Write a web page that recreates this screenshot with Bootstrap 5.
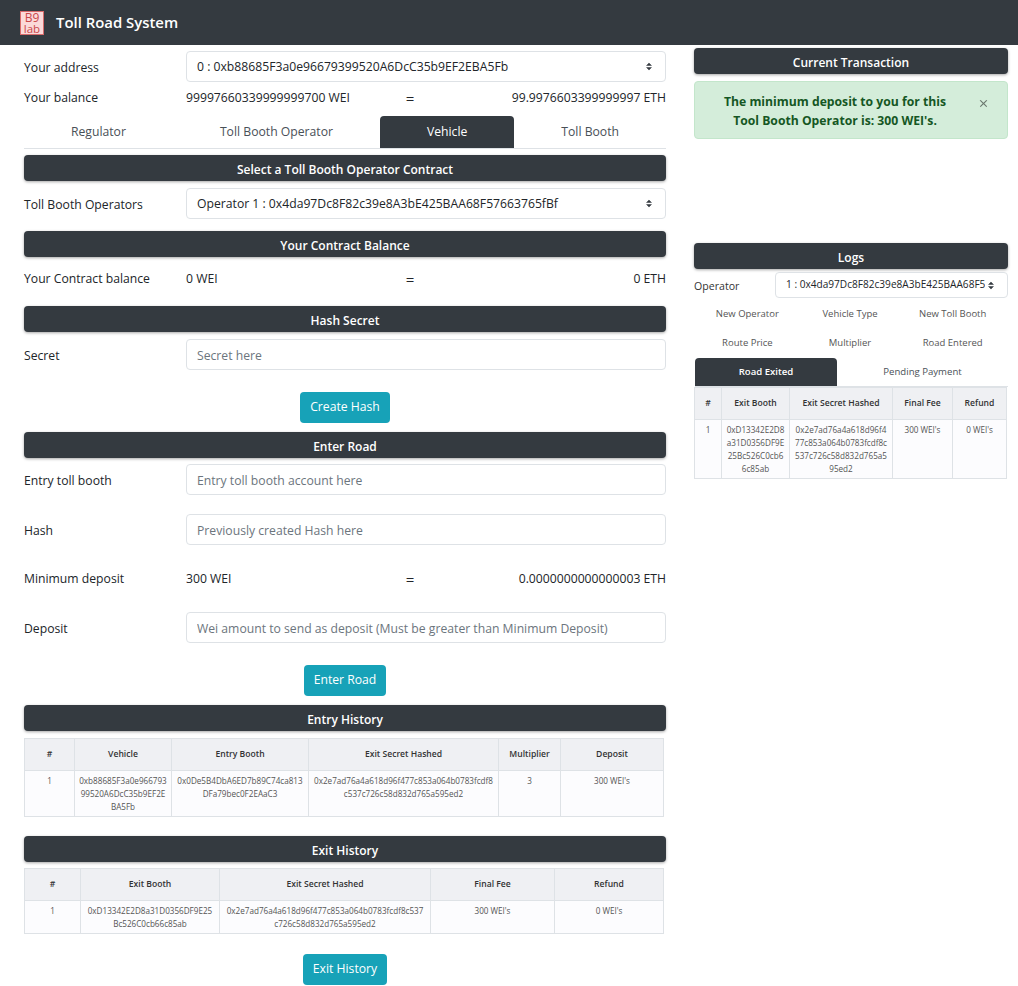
<!DOCTYPE html>
<html lang="en">
<head>
  <meta charset="UTF-8" />
  <title>Toll Road System</title>
  <link href="https://cdn.jsdelivr.net/npm/bootstrap@5.3.3/dist/css/bootstrap.min.css" rel="stylesheet" />
  <style>
    body { font-family: "Open Sans", "Noto Sans", sans-serif; font-size: 12.2px; line-height: 20px; color: #212529; overflow-x: hidden; }
    .top-bar { height: 45px; background: #343a40; padding: 0 20px; }
    .top-bar svg { overflow: visible; }
    .top-bar .brand { font-size: 14.9px; font-weight: 600; color: #fff; margin-left: 12px; margin-top: -2px; }
    .left-col { width: 642px; margin-left: 24px; padding-top: 6px; }
    .right-col { width: 314px; margin-left: 28px; padding-top: 3px; }
    .sec-bar { height: 26px; line-height: 26px; padding-top: 2px; background: #343a40; color: #fff; font-weight: 600; font-size: 12px; text-align: center; border-radius: 4px; box-shadow: 0 1px 3px rgba(0,0,0,.35); }
    .fld-row { display: flex; align-items: center; }
    .fld-label { width: 162px; flex: none; padding-top: 2px; }
    .txt-row { height: 20px; }
    .txt-row .fld-label { padding-top: 0; }
    .fld-row .form-control, .fld-row .form-select { height: 31px; font-size: 12.2px; padding: 2px 10px 0; border-radius: 4px; }
    .form-control::placeholder { color: #6c757d; }
    .fld-row .form-select, .fld-row .mini-select {
      background-image: url("data:image/svg+xml,%3csvg xmlns='http://www.w3.org/2000/svg' viewBox='0 0 4 5'%3e%3cpath fill='%23343a40' d='M2 0L0 2h4zm0 5L0 3h4z'/%3e%3c/svg%3e");
      background-size: 6px 9px; background-position: right 13px center;
    }
    .val-grid { display: grid; grid-template-columns: 192px 64px 1fr; flex: 1; }
    .val-grid > :nth-child(2) { text-align: center; font-size: 15px; }
    .val-grid > :nth-child(3) { text-align: right; }
    .tabs-main { height: 33px; }
    .tabs-main .nav-link, .tabs-log .nav-link { color: #495057; border: 0; border-radius: 4px 4px 0 0; padding: 0 4px; height: 32px; line-height: 32px; font-size: 12.2px; }
    .tabs-main .nav-link.active, .tabs-log .nav-link.active { background: #343a40; color: #fff; }
    .btn-teal { background: #17a2b8; border: 0; color: #fff; font-size: 12.2px; height: 31px; padding: 0 10px; border-radius: 4px; }
    .t-small { table-layout: fixed; width: 100%; font-size: 8.15px; line-height: 13px; color: #555; margin: 0; text-align: center; border-color: #dee2e6; }
    .t-small th { background: #eff0f3; height: 32px; vertical-align: middle; padding: 0 2px; font-weight: 600; color: #333; font-size: 8.6px; }
    .t-small td { background: #fcfcfe; padding: 3px 4px; vertical-align: top; word-break: break-all; }
    #entryTbl td:nth-child(2) { padding: 3px 3.4px; }
    #entryTbl td:nth-child(3) { padding: 3px; }
    #exitTbl td:nth-child(2) { padding: 3px 5px; }
    #exitTbl td:nth-child(3) { padding: 3px 5.5px; }
    .tbl-wrap { width: 640px; }
    #entryTbl th:nth-child(1) { width: 50px; } #entryTbl th:nth-child(2) { width: 97px; } #entryTbl th:nth-child(3) { width: 137px; } #entryTbl th:nth-child(4) { width: 190px; } #entryTbl th:nth-child(5) { width: 62px; }
    #exitTbl th:nth-child(1) { width: 56px; } #exitTbl th:nth-child(2) { width: 139px; } #exitTbl th:nth-child(3) { width: 211px; } #exitTbl th:nth-child(4) { width: 124px; }
    #logTbl th:nth-child(1) { width: 27px; } #logTbl th:nth-child(2) { width: 68px; } #logTbl th:nth-child(3) { width: 103px; } #logTbl th:nth-child(4) { width: 60px; }
    .m-6px { margin-top: 6px; } .m-7px { margin-top: 7px; } .m-8px { margin-top: 8px; } .m-9px { margin-top: 9px; }
    .m-12px { margin-top: 12px; } .m-17px { margin-top: 17px; } .m-19px { margin-top: 19px; } .m-20px { margin-top: 20px; } .m-22px { margin-top: 22px; } .m-23px { margin-top: 23px; } .m-24px { margin-top: 24px; }
    .alert-box { margin-top: 7px; height: 58px; margin-bottom: 0; padding: 10px 48px 0 16px; font-size: 12.2px; font-weight: 700; text-align: center; line-height: 19px; border-radius: 4px; background: #d4edda; border-color: #c3e6cb; color: #155724; }
    .alert-box .btn-close { padding: 0; width: 9px; height: 9px; top: 17px; right: 19px; background-size: 9px; }
    .logs-gap { margin-top: 104px; }
    .op-row { height: 26px; margin-top: 3px; font-size: 10.6px; }
    .op-label { width: 81px; flex: none; color: #333; padding-top: 1px; }
    .mini-select { height: 26px !important; font-size: 10.1px !important; padding: 0 22px 0 10px !important; }
    .pill-row { height: 29px; width: 308px; margin-left: 2px; font-size: 9.5px; color: #555; text-align: center; }
    .pill-row > div { flex: 1; line-height: 29px; padding-top: 1px; }
    .tabs-log { height: 29px; margin-left: 1px; margin-top: 2px; }
    .tabs-log .nav-link { height: 28px; line-height: 28px; font-size: 9.6px; }
    .tabs-log .nav-link.active { font-weight: 600; }
    .tabs-log .nav-item:first-child { flex: 0 0 142px; }
    .log-tbl-wrap { width: 313px; }
  </style>
</head>
<body>
  <div class="top-bar d-flex align-items-center">
    <svg width="24" height="24" viewBox="0 0 24 24">
      <rect x="0.5" y="0.5" width="23" height="23" fill="#fbd9d9" stroke="#d96b6b" />
      <text x="12" y="11" text-anchor="middle" font-family="Open Sans" font-size="12" fill="#c9474a">B9</text>
      <text x="12" y="21.5" text-anchor="middle" font-family="Open Sans" font-size="11.5" fill="#c9474a">lab</text>
    </svg>
    <span class="brand">Toll Road System</span>
  </div>

  <div class="d-flex">
    <div class="left-col">
      <div class="fld-row">
        <div class="fld-label">Your address</div>
        <select class="form-select"><option>0 : 0xb88685F3a0e96679399520A6DcC35b9EF2EBA5Fb</option></select>
      </div>
      <div class="fld-row txt-row m-6px">
        <div class="fld-label">Your balance</div>
        <div class="val-grid"><span>99997660339999999700 WEI</span><span>=</span><span>99.9976603399999997 ETH</span></div>
      </div>
      <ul class="nav nav-tabs nav-fill tabs-main m-8px">
        <li class="nav-item"><a class="nav-link" href="#">Regulator</a></li>
        <li class="nav-item"><a class="nav-link" href="#">Toll Booth Operator</a></li>
        <li class="nav-item"><a class="nav-link active" href="#">Vehicle</a></li>
        <li class="nav-item"><a class="nav-link" href="#">Toll Booth</a></li>
      </ul>
      <div class="sec-bar m-6px">Select a Toll Booth Operator Contract</div>
      <div class="fld-row m-7px">
        <div class="fld-label">Toll Booth Operators</div>
        <select class="form-select"><option>Operator 1 : 0x4da97Dc8F82c39e8A3bE425BAA68F57663765fBf</option></select>
      </div>
      <div class="sec-bar m-12px">Your Contract Balance</div>
      <div class="fld-row txt-row m-12px">
        <div class="fld-label">Your Contract balance</div>
        <div class="val-grid"><span>0 WEI</span><span>=</span><span>0 ETH</span></div>
      </div>
      <div class="sec-bar m-17px">Hash Secret</div>
      <div class="fld-row m-7px">
        <div class="fld-label">Secret</div>
        <input class="form-control" placeholder="Secret here" />
      </div>
      <div class="text-center m-22px"><button class="btn btn-teal">Create Hash</button></div>
      <div class="sec-bar m-9px">Enter Road</div>
      <div class="fld-row m-6px">
        <div class="fld-label">Entry toll booth</div>
        <input class="form-control" placeholder="Entry toll booth account here" />
      </div>
      <div class="fld-row m-19px">
        <div class="fld-label">Hash</div>
        <input class="form-control" placeholder="Previously created Hash here" />
      </div>
      <div class="fld-row txt-row m-24px">
        <div class="fld-label">Minimum deposit</div>
        <div class="val-grid"><span>300 WEI</span><span>=</span><span>0.0000000000000003 ETH</span></div>
      </div>
      <div class="fld-row m-23px">
        <div class="fld-label">Deposit</div>
        <input class="form-control" placeholder="Wei amount to send as deposit (Must be greater than Minimum Deposit)" />
      </div>
      <div class="text-center m-22px"><button class="btn btn-teal">Enter Road</button></div>
      <div class="sec-bar m-9px">Entry History</div>
      <div class="tbl-wrap m-7px">
        <table class="table table-bordered t-small" id="entryTbl">
          <thead><tr><th>#</th><th>Vehicle</th><th>Entry Booth</th><th>Exit Secret Hashed</th><th>Multiplier</th><th>Deposit</th></tr></thead>
          <tbody><tr><td>1</td><td>0xb88685F3a0e96679399520A6DcC35b9EF2EBA5Fb</td><td>0x0De5B4DbA6ED7b89C74ca813DFa79bec0F2EAaC3</td><td>0x2e7ad76a4a618d96f477c853a064b0783fcdf8c537c726c58d832d765a595ed2</td><td>3</td><td>300 WEI's</td></tr></tbody>
        </table>
      </div>
      <div class="sec-bar m-19px">Exit History</div>
      <div class="tbl-wrap m-6px">
        <table class="table table-bordered t-small" id="exitTbl">
          <thead><tr><th>#</th><th>Exit Booth</th><th>Exit Secret Hashed</th><th>Final Fee</th><th>Refund</th></tr></thead>
          <tbody><tr><td>1</td><td>0xD13342E2D8a31D0356DF9E25Bc526C0cb66c85ab</td><td>0x2e7ad76a4a618d96f477c853a064b0783fcdf8c537c726c58d832d765a595ed2</td><td>300 WEI's</td><td>0 WEI's</td></tr></tbody>
        </table>
      </div>
      <div class="text-center m-20px"><button class="btn btn-teal">Exit History</button></div>
    </div>

    <div class="right-col">
      <div class="sec-bar">Current Transaction</div>
      <div class="alert alert-success alert-dismissible alert-box">
        The minimum deposit to you for this Tool Booth Operator is: 300 WEI's.
        <button type="button" class="btn-close" aria-label="Close"></button>
      </div>
      <div class="sec-bar logs-gap">Logs</div>
      <div class="fld-row op-row">
        <div class="op-label">Operator</div>
        <select class="form-select mini-select"><option>1 : 0x4da97Dc8F82c39e8A3bE425BAA68F57663765fBf</option></select>
      </div>
      <div class="d-flex pill-row"><div>New Operator</div><div>Vehicle Type</div><div>New Toll Booth</div></div>
      <div class="d-flex pill-row"><div>Route Price</div><div>Multiplier</div><div>Road Entered</div></div>
      <ul class="nav nav-tabs nav-fill tabs-log">
        <li class="nav-item"><a class="nav-link active" href="#">Road Exited</a></li>
        <li class="nav-item"><a class="nav-link" href="#">Pending Payment</a></li>
      </ul>
      <div class="log-tbl-wrap">
        <table class="table table-bordered t-small" id="logTbl">
          <thead><tr><th>#</th><th>Exit Booth</th><th>Exit Secret Hashed</th><th>Final Fee</th><th>Refund</th></tr></thead>
          <tbody><tr><td>1</td><td>0xD13342E2D8a31D0356DF9E25Bc526C0cb66c85ab</td><td>0x2e7ad76a4a618d96f477c853a064b0783fcdf8c537c726c58d832d765a595ed2</td><td>300 WEI's</td><td>0 WEI's</td></tr></tbody>
        </table>
      </div>
    </div>
  </div>
  <script src="https://cdn.jsdelivr.net/npm/bootstrap@5.3.3/dist/js/bootstrap.bundle.min.js"></script>
</body>
</html>
